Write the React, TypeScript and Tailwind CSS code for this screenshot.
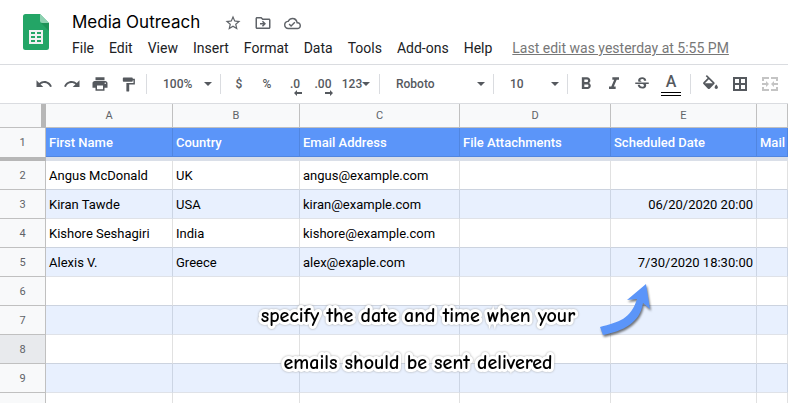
import type { ReactNode } from "react";
import {
  MdFormatBold,
  MdFormatItalic,
  MdFormatPaint,
  MdOutlineCloudDone,
  MdOutlineDriveFileMove,
  MdPrint,
  MdRedo,
  MdStarBorder,
  MdStrikethroughS,
  MdUndo,
} from "react-icons/md";

const menus = ["File", "Edit", "View", "Insert", "Format", "Data", "Tools", "Add-ons", "Help"];

const columns = [
  { letter: "A", title: "First Name", width: "w-[127px]" },
  { letter: "B", title: "Country", width: "w-[127px]" },
  { letter: "C", title: "Email Address", width: "w-[160px]" },
  { letter: "D", title: "File Attachments", width: "w-[151px]" },
  { letter: "E", title: "Scheduled Date", width: "w-[146px]" },
  { letter: "", title: "Mail", width: "" },
];

const rows = [
  ["Angus McDonald", "UK", "angus@example.com", "", "", ""],
  ["Kiran Tawde", "USA", "kiran@example.com", "", "06/20/2020 20:00", ""],
  ["Kishore Seshagiri", "India", "kishore@example.com", "", "", ""],
  ["Alexis V.", "Greece", "alex@exaple.com", "", "7/30/2020 18:30:00", ""],
  ["", "", "", "", "", ""],
  ["", "", "", "", "", ""],
  ["", "", "", "", "", ""],
  ["", "", "", "", "", ""],
  ["", "", "", "", "", ""],
];

const ACTIVE_ROW = 8;

function SheetsLogo() {
  return (
    <svg viewBox="0 0 26 36" className="h-9 w-[26px] shrink-0" aria-hidden="true">
      <path d="M2.5 0H17l9 9v24.5a2.5 2.5 0 0 1-2.5 2.5h-21A2.5 2.5 0 0 1 0 33.5v-31A2.5 2.5 0 0 1 2.5 0z" fill="#23a566" />
      <path d="M18 9l8 8V9z" fill="#1c9257" />
      <path d="M17 0l9 9h-6.5A2.5 2.5 0 0 1 17 6.5z" fill="#8ed1b1" />
      <path
        d="M6 16h14v14H6zM8 18v2h4v-2zM14 18v2h4v-2zM8 22v2h4v-2zM14 22v2h4v-2zM8 26v2h4v-2zM14 26v2h4v-2z"
        fill="#f1f1f1"
        fillRule="evenodd"
      />
    </svg>
  );
}

function Caret({ className = "" }: { className?: string }) {
  return (
    <svg viewBox="0 0 8 4" className={`h-1 w-2 shrink-0 ${className}`} fill="currentColor" aria-hidden="true">
      <path d="M0 0h8L4 4z" />
    </svg>
  );
}

function FillIcon() {
  return (
    <svg viewBox="3 0 18 17" className="mb-1 h-3.5 w-[15px]" fill="currentColor" aria-hidden="true">
      <path d="M16.56 8.94L7.62 0 6.21 1.41l2.38 2.38-5.15 5.15c-.59.59-.59 1.54 0 2.12l5.5 5.5c.29.29.68.44 1.06.44s.77-.15 1.06-.44l5.5-5.5c.59-.58.59-1.53 0-2.12zM5.21 10L10 5.21 14.79 10H5.21zM19 11.5s-2 2.17-2 3.5c0 1.1.9 2 2 2s2-.9 2-2c0-1.33-2-3.5-2-3.5z" />
    </svg>
  );
}

function BordersIcon() {
  return (
    <svg viewBox="0 0 14 14" className="size-3.5" fill="currentColor" fillRule="evenodd" aria-hidden="true">
      <path d="M0 0h14v14H0zM2 2v4h4V2zM8 2v4h4V2zM2 8v4h4V8zM8 8v4h4V8z" />
    </svg>
  );
}

function MergeIcon() {
  return (
    <svg viewBox="0 0 16 14" className="h-3.5 w-4" fill="currentColor" aria-hidden="true">
      <path d="M0 0h7v2H2v2H0zM9 0h7v4h-2V2H9zM0 10h2v2h5v2H0zM14 10h2v4H9v-2h5z" />
      <path d="M0 6h4V4l3 3-3 3V8H0zM16 6h-4V4L9 7l3 3V8h4z" />
    </svg>
  );
}

function DecimalArrow({ right = false }: { right?: boolean }) {
  return (
    <svg
      viewBox="0 0 8 6"
      className={`absolute -right-0.5 bottom-0 h-1.5 w-2 ${right ? "rotate-180" : ""}`}
      fill="currentColor"
      aria-hidden="true"
    >
      <path d="M0 3l3-3v2h5v2H3v2z" />
    </svg>
  );
}

function ToolButton({ label, className = "w-7", children }: { label: string; className?: string; children: ReactNode }) {
  return (
    <button type="button" aria-label={label} className={`flex h-7 shrink-0 items-center justify-center ${className}`}>
      {children}
    </button>
  );
}

function ToolSelect({ label, value, width }: { label: string; value: string; width: string }) {
  return (
    <div className={`relative flex shrink-0 items-center ${width}`}>
      <select aria-label={label} defaultValue={value} className="h-7 w-full appearance-none bg-transparent pl-3 text-xs font-medium">
        <option>{value}</option>
      </select>
      <Caret className="pointer-events-none absolute right-1" />
    </div>
  );
}

function Separator() {
  return <div className="mx-1 h-5 w-px shrink-0 bg-[#dadce0]" />;
}

function Header() {
  return (
    <header className="flex h-16 items-start pt-2 pl-[23px]">
      <div className="pt-1.5">
        <SheetsLogo />
      </div>
      <div className="ml-4 flex flex-col">
        <div className="flex h-7 items-center pl-[7px]">
          <h1 className="mr-6 font-[Inter,sans-serif] text-[17px] leading-6 text-black">Media Outreach</h1>
          <div className="flex items-center gap-3 pt-0.5 text-[#5f6368]">
            <button type="button" aria-label="Star">
              <MdStarBorder size={18} />
            </button>
            <button type="button" aria-label="Move">
              <MdOutlineDriveFileMove size={18} />
            </button>
            <button type="button" aria-label="See document status">
              <MdOutlineCloudDone size={17} />
            </button>
          </div>
        </div>
        <nav className="flex h-6 items-center gap-px text-sm whitespace-nowrap text-[#202124]">
          {menus.map((menu) => (
            <button key={menu} type="button" className="px-[7px]">
              {menu}
            </button>
          ))}
          <a href="#history" className="ml-3 text-[#777] underline">
            Last edit was yesterday at 5:55 PM
          </a>
        </nav>
      </div>
    </header>
  );
}

function Toolbar() {
  return (
    <div className="flex h-10 items-center border-y border-[#dadce0] pl-[30px] text-[#55595e]">
      <ToolButton label="Undo"><MdUndo size={18} /></ToolButton>
      <ToolButton label="Redo"><MdRedo size={18} /></ToolButton>
      <ToolButton label="Print"><MdPrint size={18} /></ToolButton>
      <ToolButton label="Paint format"><MdFormatPaint size={17} /></ToolButton>
      <Separator />
      <ToolSelect label="Zoom" value="100%" width="w-[65px]" />
      <Separator />
      <ToolButton label="Format as currency" className="w-7 text-xs font-medium">$</ToolButton>
      <ToolButton label="Format as percent" className="w-7 text-xs font-medium">%</ToolButton>
      <ToolButton label="Decrease decimal places" className="w-7 text-xs font-medium">
        <span className="relative py-1">
          .0
          <DecimalArrow />
        </span>
      </ToolButton>
      <ToolButton label="Increase decimal places" className="w-7 text-xs font-medium">
        <span className="relative py-1">
          .00
          <DecimalArrow right />
        </span>
      </ToolButton>
      <ToolButton label="More formats" className="w-[38px] text-xs font-medium">
        123
        <Caret />
      </ToolButton>
      <Separator />
      <ToolSelect label="Font" value="Roboto" width="w-[105px]" />
      <Separator />
      <ToolSelect label="Font size" value="10" width="w-[65px]" />
      <Separator />
      <ToolButton label="Bold"><MdFormatBold size={20} /></ToolButton>
      <ToolButton label="Italic"><MdFormatItalic size={20} /></ToolButton>
      <ToolButton label="Strikethrough"><MdStrikethroughS size={18} /></ToolButton>
      <ToolButton label="Text color" className="w-[30px] flex-col">
        <span className="text-base leading-5 font-medium">A</span>
        <span className="h-1 w-5 border-y border-black" />
      </ToolButton>
      <Separator />
      <ToolButton label="Fill color" className="w-[30px]"><FillIcon /></ToolButton>
      <ToolButton label="Borders" className="w-[30px]"><BordersIcon /></ToolButton>
      <ToolButton label="Merge cells" className="w-[30px] text-[#c4c4c4]"><MergeIcon /></ToolButton>
    </div>
  );
}

function Sheet() {
  return (
    <table className="w-full table-fixed border-separate border-spacing-0 text-left text-[13px] leading-4 whitespace-nowrap text-black">
      <colgroup>
        <col className="w-[46px]" />
        {columns.map((col) => (
          <col key={col.title} className={col.width} />
        ))}
      </colgroup>
      <thead>
        <tr className="h-6 bg-[#f8f9fa] text-center text-[11px] text-[#5f6368]">
          <td className="border-r-5 border-b border-r-[#b7b7b7] border-b-[#c0c0c0] p-0" />
          {columns.map((col) => (
            <th key={col.title} scope="col" className="border-r border-b border-[#c0c0c0] p-0 font-normal">
              {col.letter}
            </th>
          ))}
        </tr>
        <tr className="h-[29px] bg-[#5b95f9] text-white">
          <th scope="row" className="border-r border-[#c0c0c0] bg-[#f8f9fa] p-0 text-center text-[11px] font-normal text-[#5f6368]">
            1
          </th>
          {columns.map((col) => (
            <th key={col.title} scope="col" className="overflow-hidden border-r border-b border-[#5186e0] px-[3px] pt-0.5 pb-0 font-medium">
              {col.title}
            </th>
          ))}
        </tr>
        <tr className="h-1">
          <td className="bg-[#b7b7b7] p-0" />
          <td colSpan={columns.length} className="bg-[#dadfe8] p-0" />
        </tr>
      </thead>
      <tbody>
        {rows.map((row, i) => {
          const number = i + 2;
          return (
            <tr key={number} className={`h-[29px] ${i % 2 ? "bg-[#e8f0fe]" : "bg-white"}`}>
              <th
                scope="row"
                className={`border-r border-b border-[#c0c0c0] px-0 pt-0.5 pb-0 text-center text-[11px] font-normal text-[#5f6368] ${
                  number === ACTIVE_ROW ? "bg-[#e8eaed]" : "bg-[#f8f9fa]"
                }`}
              >
                {number < 10 ? number : ""}
              </th>
              {row.map((value, c) => (
                <td
                  key={c}
                  className={`border-r border-b px-[3px] pt-0.5 pb-0 ${c === 4 ? "text-right" : ""} ${
                    i % 2 ? "border-r-[#ccd5e4] border-b-[#dfe2e8]" : "border-r-[#e1e1e1] border-b-[#ccd3df]"
                  }`}
                >
                  {value}
                </td>
              ))}
            </tr>
          );
        })}
      </tbody>
    </table>
  );
}

function Annotation() {
  return (
    <>
      <p className="absolute top-[188px] left-[238px] w-[360px] text-center font-['Comic_Neue','Comic_Sans_MS','Open_Sans',sans-serif] text-xl leading-[47px] font-bold whitespace-nowrap text-black drop-shadow-[0_0_1px_#aaa] [-webkit-text-stroke:6px_white] [paint-order:stroke_fill]">
        specify the date and time when your
        <br />
        emails should be sent delivered
      </p>
      <svg viewBox="0 0 52 54" className="absolute top-[178px] left-[599px] h-[54px] w-[52px] drop-shadow-[1px_2px_1px_#00000088]" aria-hidden="true">
        <path d="M1 45C20 40 32 37 38 17L28 18L47 2L51 27L44 21C41 41 24 49 4 53z" fill="#5b95f9" />
      </svg>
    </>
  );
}

export default function App() {
  return (
    <div className="h-screen overflow-hidden bg-white font-[Roboto,sans-serif]">
      <Header />
      <Toolbar />
      <main className="relative">
        <Sheet />
        <Annotation />
      </main>
    </div>
  );
}
